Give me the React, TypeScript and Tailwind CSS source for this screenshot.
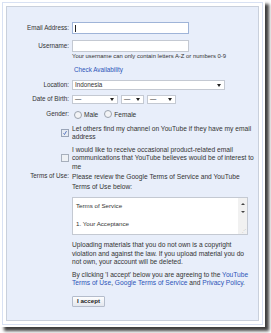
import React from "react";

const Label: React.FC<{ children?: React.ReactNode; className?: string }> = ({
  children,
  className = "",
}) => (
  <div className={`w-[65px] shrink-0 pr-[3px] text-right ${className}`}>{children}</div>
);

const Select: React.FC<{ value: string; className: string }> = ({ value, className }) => (
  <div
    className={`flex h-[9px] items-center justify-between border border-[#c4c9d2] bg-white pl-[2px] pr-[3px] ${className}`}
  >
    <span className="leading-none">{value}</span>
    <span className="h-0 w-0 border-x-[2.5px] border-t-[3px] border-x-transparent border-t-[#222]" />
  </div>
);

const Radio: React.FC = () => (
  <span className="inline-block h-[8px] w-[8px] rounded-full border border-[#9ba3ae] bg-[#f3f4f6]" />
);

const App: React.FC = () => {
  return (
    <div
      className="h-[333px] w-[271px] bg-white text-[6.3px] leading-[8.5px] text-[#333]"
      style={{ fontFamily: '"Liberation Sans", Arial, sans-serif' }}
    >
      <div className="h-[327px] w-[265px] bg-white p-[2px] shadow-[4px_4px_3px_rgba(0,0,0,0.75)]">
        <div className="h-full border border-[#d8e1f3] p-[3px]">
          <div className="h-full border border-[#c9d0dc] bg-[#e8eefa] pt-[15px]">
            {/* Email */}
            <div className="flex items-center">
              <Label>Email Address:</Label>
              <div className="flex h-[12px] w-[117px] items-center border border-[#9fb4d8] bg-white pl-[2px]">
                <span className="h-[7px] w-px bg-[#222]" />
              </div>
            </div>

            {/* Username */}
            <div className="mt-[6px] flex items-center">
              <Label>Username:</Label>
              <div className="h-[12px] w-[117px] border border-[#c4c9d2] bg-white" />
            </div>
            <div className="flex">
              <Label />
              <div className="text-[5.9px]">Your username can only contain letters A-Z or numbers 0-9</div>
            </div>
            <div className="mt-[5px] flex">
              <Label />
              <div className="pl-[2px] text-[#2c54b8]">Check Availability</div>
            </div>

            {/* Location */}
            <div className="mt-[6px] flex items-center">
              <Label>Location:</Label>
              <Select value="Indonesia" className="h-[10px] w-[153px]" />
            </div>

            {/* Date of Birth */}
            <div className="mt-[5px] flex items-center">
              <Label>Date of Birth:</Label>
              <div className="flex gap-[3px]">
                <Select value="—" className="w-[46px]" />
                <Select value="—" className="w-[23px]" />
                <Select value="—" className="w-[29px]" />
              </div>
            </div>

            {/* Gender */}
            <div className="mt-[6px] flex items-center">
              <Label className="-mt-[3px]">Gender:</Label>
              <div className="flex items-center pl-[2px]">
                <Radio />
                <span className="ml-[2px] text-[6.6px]">Male</span>
                <span className="ml-[6px]">
                  <Radio />
                </span>
                <span className="ml-[2px] text-[6.6px]">Female</span>
              </div>
            </div>

            {/* Checkboxes */}
            <div className="mt-[4px] flex items-center">
              <div className="flex w-[65px] shrink-0 justify-end pr-[3px]">
                <span className="flex h-[8px] w-[8px] items-center justify-center border border-[#9aa5b8] bg-[#e6ebf3]">
                  <svg viewBox="0 0 8 8" className="h-[6px] w-[6px]">
                    <path d="M2 4.5 L3.3 6 L6 1.5" fill="none" stroke="#2a4fb0" strokeWidth="1" />
                  </svg>
                </span>
              </div>
              <div className="w-[182px] text-[6.65px]">
                Let others find my channel on YouTube if they have my email address
              </div>
            </div>
            <div className="mt-[4px] flex items-center">
              <div className="flex w-[65px] shrink-0 justify-end pr-[3px]">
                <span className="h-[8px] w-[8px] border border-[#a7afbc] bg-[#eef1f5]" />
              </div>
              <div className="w-[182px] text-[6.65px]">
                I would like to receive occasional product-related email communications that
                YouTube believes would be of interest to me
              </div>
            </div>

            {/* Terms of Use */}
            <div className="mt-[1px] flex">
              <Label>Terms of Use:</Label>
              <div className="w-[182px] text-[6.65px]">
                <div className="pr-[8px] leading-[9.5px]">
                  Please review the Google Terms of Service and YouTube Terms of Use below:
                </div>
                <div className="mt-[6px] flex h-[38px] w-[176px] border border-[#c4c9d2] bg-white">
                  <div className="flex-1 pl-[3px] pt-[4px] text-[6.2px] leading-[8px]">
                    <div>Terms of Service</div>
                    <div className="mt-[10px]">1. Your Acceptance</div>
                  </div>
                  <div className="flex w-[9px] flex-col items-center bg-[#f1f1f1] pt-[5px]">
                    <span className="h-0 w-0 border-x-[2px] border-b-[2.5px] border-x-transparent border-b-[#444]" />
                    <span className="mt-[6px] h-0 w-0 border-x-[2px] border-t-[2.5px] border-x-transparent border-t-[#444]" />
                    <span className="mt-auto mb-[1px] ml-[3px] text-[4px] leading-none text-[#bbb]">⋰</span>
                  </div>
                </div>
                <p className="mt-[6px]">
                  Uploading materials that you do not own is a copyright violation and against the
                  law. If you upload material you do not own, your account will be deleted.
                </p>
                <p className="mt-[4px]">
                  By clicking 'I accept' below you are agreeing to the{" "}
                  <a className="text-[#2c54b8]">YouTube Terms of Use</a>,{" "}
                  <a className="text-[#2c54b8]">Google Terms of Service</a> and{" "}
                  <a className="text-[#2c54b8]">Privacy Policy</a>.
                </p>
                <button className="mt-[8px] h-[11px] w-[33px] rounded-[1px] border border-[#b4bccb] bg-gradient-to-b from-[#fdfdfe] to-[#e3e7ee] text-[6.2px] font-bold leading-none text-[#222]">
                  I accept
                </button>
              </div>
            </div>
          </div>
        </div>
      </div>
    </div>
  );
};

export default App;
